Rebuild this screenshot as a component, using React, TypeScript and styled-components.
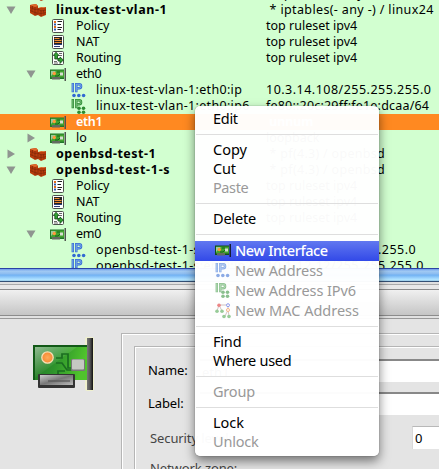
import React from "react";
import styled, { createGlobalStyle, css } from "styled-components";

const Global = createGlobalStyle`
  *{box-sizing:border-box}
  html,body{margin:0;padding:0;overflow:hidden}
  body{font-family:"Noto Sans","Open Sans",sans-serif;color:#000}
  svg{display:block;flex:none}
`;
const Window = styled.div`
  position: relative; width: 439px; height: 469px; overflow: hidden; background: #e4e4e4;
`;
const Tree = styled.div`height: 268px; overflow: hidden; background: #d2ffd0;`;
const TreeScroll = styled.div`margin-top: -14px;`;
const Row = styled.div<{ $selected?: boolean }>`
  display: grid; grid-template-columns: 266px 1fr; height: 16px; line-height: 16px;
  font-size: 12.5px; white-space: pre;
  ${p => p.$selected && css`background: #ff8921; color: #fff; font-weight: 600;`}
`;
const NameCell = styled.div<{ $level: number }>`
  display: flex; align-items: center; padding-left: ${p => 5 + p.$level * 20}px; min-width: 0;
`;
const ArrowSlot = styled.span`width: 12px; margin-right: 12px; display: flex; flex: none; justify-content: center;`;
const IconSlot = styled.span`width: 18px; display: flex; flex: none; justify-content: center;`;
const Label = styled.span<{ $bold?: boolean; $ls: number; $gap: number }>`
  margin-left: ${p => p.$gap}px; font-weight: ${p => (p.$bold ? 700 : "inherit")};
  letter-spacing: ${p => p.$ls}px;
`;
const Detail = styled.span<{ $ls: number }>`letter-spacing: ${p => p.$ls}px;`;
const Splitter = styled.div`
  height: 14px; border-top: 1px solid #2b43a6; border-bottom: 1px solid #345075;
  background: linear-gradient(#6d9de8 0, #a1c9f3 18%, #8bbcf0 42%, #70b0f3 50%, #a7dcff 82%, #b6e9ff 94%, #6f9cc3 100%);
`;
const Edge = styled.div`height: 8px; background: linear-gradient(#e0e0e0 0 2px, #aaa 2px 3px, #e8e8e8 3px 7px, #8c8c8c 7px);`;
const Toolbar = styled.div`height: 26px; background: linear-gradient(#f0f0f0, #c5c5c5); border-bottom: 1px solid #8c8c8c;`;
const Rule = styled.div`height: 3px; background: #e1e1e1; border-bottom: 1px solid #999;`;
const Editor = styled.div`display: flex; height: 150px;`;
const Preview = styled.div`width: 121px; flex: none; padding: 17px 0 0 30px;`;
const Outer = styled.div`
  flex: 1; margin-top: 14px; padding: 12px 0 0 12px; height: 160px;
  border-left: 1px solid #b5b5b5; border-top: 1px solid #b5b5b5; box-shadow: inset 1px 1px #fff;
`;
const Inner = styled.div`
  height: 150px; border-left: 1px solid #b5b5b5; border-top: 1px solid #b5b5b5;
  box-shadow: inset 1px 1px #fff; padding: 12px 0 0 13px;
`;
const Field = styled.div<{ $h: number; $dim?: boolean }>`
  height: ${p => p.$h}px; display: flex; align-items: flex-start; font-size: 13px; line-height: 22px;
  color: ${p => (p.$dim ? "#444" : "#000")}; padding-left: ${p => (p.$dim ? 2 : 0)}px; white-space: nowrap;
`;
const FieldName = styled.span<{ $w: number }>`width: ${p => p.$w}px; flex: none; letter-spacing: -0.1px;`;
const Input = styled.div`
  flex: 1; height: 23px; background: #fff; border-top: 2px solid #888; line-height: 22px; padding-left: 2px; color: #000;
`;
const Spin = styled(Input)`border-top: 1px solid #b8b8b8; border-left: 1px solid #d8d8d8; margin-top: -1px;`;

const Menu = styled.div`
  position: absolute; left: 195px; top: 106px; width: 184px; height: 350px; padding: 4px 0;
  background: rgba(255,255,255,.975); border-radius: 5px; overflow: hidden;
`;
const MenuShadow = styled.div`
  position: absolute; left: 195px; top: 106px; width: 184px; height: 350px; border-radius: 5px;
  box-shadow: 0 0 1px rgba(0,0,0,.65), 0 5px 11px rgba(0,0,0,.5);
`;
const Item = styled.div<{ $icon?: boolean; $off?: boolean; $on?: boolean }>`
  height: ${p => (p.$icon ? 20 : 19)}px; line-height: ${p => (p.$icon ? 20 : 19)}px;
  display: flex; align-items: center; gap: 4px; padding-left: ${p => (p.$icon ? 20 : 18)}px;
  padding-bottom: ${p => (p.$icon ? 3 : 2)}px;
  font-size: 14.5px; white-space: nowrap; color: ${p => (p.$on ? "#fff" : p.$off ? "#999" : "#000")};
  ${p => p.$on && css`background: linear-gradient(#6178f0, #3249e8); font-weight: 500;`}
  svg { opacity: ${p => (p.$off ? 0.55 : 1)}; }
`;
const MenuIcon = styled.span`width: 16px; height: 16px; display: flex; align-items: center; padding-top: 2px;`;
const ItemText = styled.span<{ $ls: number }>`letter-spacing: ${p => p.$ls}px;`;
const Separator = styled.div`height: 1px; margin: 5px 1px 6px; background: #dedede;`;

const Arrow = ({ open }: { open: boolean }) => (
  <svg width="10" height="10" viewBox="0 0 10 10">
    <path d={open ? "M.5 1.5h9L5 9z" : "M1.5 .5v9L9 5z"} fill="#8f9590" />
  </svg>
);
const Firewall = () => (
  <svg width="16" height="13" viewBox="0 0 16 13">
    <path d="M0 1l6-1 2 2v2h3l5-1v8l-5 2-3-2-3 1-5-3z" fill="#b83c0c" />
    <path d="M0 1l6-1 2 2-3 1zM8 4l3-1 5 0-4 1z" fill="#de6a2c" />
    <path d="M0 3.5l5 2 3-.5 3 2 5-1M0 6.5l5 2 6 1 5-1M2.5 2v2.5M2 5v2.5M5 3v8M8 5v3M11 6v6M13.5 6v2.5M7 9v2M14 9v2" stroke="#7e2608" strokeWidth=".7" fill="none" />
  </svg>
);
const Doc = ({ kind }: { kind: "policy" | "nat" | "routing" }) => (
  <svg width="12" height="14" viewBox="0 0 12 14">
    <rect x=".5" y=".5" width="11" height="13" rx="1" fill="#fff" stroke="#4b504b" />
    {kind === "policy" && <>
      <path d="M2 3h2M2 8h2" stroke="#e26c18" strokeWidth="2" />
      <path d="M2 5.5h2M2 10.5h2" stroke="#3158a8" strokeWidth="2" />
      <path d="M5.5 2.5H10M5.5 5.5H9M5.5 8.5H10M5.5 10.5H9" stroke="#222" />
    </>}
    {kind === "nat" && <>
      <rect x="2" y="2" width="8" height="7" fill="#222" />
      <path d="M2.5 3.5h5M2.5 5.5h7M2.5 7.5h7" stroke="#f08c30" />
      <path d="M2 9.5h8M2 11.5h6" stroke="#2f4178" />
    </>}
    {kind === "routing" && <>
      <path d="M7 2.5h3M7 4.5h3M2 10.5h3M2 12h4" stroke="#444" strokeWidth=".8" />
      <path d="M4 1.2L1.3 4.5h1.5V8H6v2h2v2.5l3.3-3.5L8 6v1.5H5.5v-3H7z" fill="#32a332" stroke="#0e4610" strokeWidth=".8" />
    </>}
  </svg>
);
const Card = ({ big, dark }: { big?: boolean; dark?: boolean }) => (
  <svg width={big ? 66 : 16} height={big ? 56 : 13} viewBox={big ? "0 0 66 56" : "0 0 16 13"}>
    {big ? <>
      <defs>
        <linearGradient id="board" x1="0" y1="0" x2="1" y2=".2"><stop stopColor="#237425" /><stop offset=".5" stopColor="#2e932c" /><stop offset="1" stopColor="#50c42c" /></linearGradient>
        <linearGradient id="shine" x1="0" y1="0" x2=".7" y2=".8"><stop stopColor="#fff" stopOpacity=".5" /><stop offset=".75" stopColor="#fff" stopOpacity="0" /></linearGradient>
        <linearGradient id="bar"><stop stopColor="#777" /><stop offset=".5" stopColor="#555" /><stop offset="1" stopColor="#111" /></linearGradient>
        <linearGradient id="metal" x1="0" y1="0" x2="1" y2="1"><stop stopColor="#ccc" /><stop offset=".5" stopColor="#777" /><stop offset="1" stopColor="#bbb" /></linearGradient>
        <radialGradient id="lamp"><stop stopColor="#ffab5a" /><stop offset="1" stopColor="#f78832" /></radialGradient>
      </defs>
      <rect x="55" y="1" width="9" height="54" rx="2" fill="#eff0cd" />
      <rect x="3" y="9" width="54" height="35" fill="url(#board)" />
      <path d="M4 44V10h53" fill="none" stroke="#125917" strokeWidth="2" />
      <path d="M5 11h42L5 42z" fill="url(#shine)" />
      <path d="M26 22h6v-4h6v14h4M26 27h6l5 7h5M28 39v-4h7" fill="none" stroke="#1b6d21" strokeWidth="1.7" />
      <circle cx="17.5" cy="21.5" r="5.7" fill="url(#lamp)" stroke="#f6dfb4" strokeWidth="1.3" />
      <rect x="41" y="23" width="14" height="12" rx="1" fill="#777" />
      <rect x="42" y="23.5" width="12" height="10" rx="1" fill="#c5c8c2" />
      <rect x="8" y="38" width="37" height="14" rx="1" fill="#343434" />
      <rect x="10" y="39" width="33" height="10" fill="url(#metal)" />
      <path d="M18 45h22" stroke="#555" strokeWidth="2" opacity=".6" />
      <rect x="57" y="2" width="6" height="52" fill="url(#bar)" />
    </> : <>
      <rect x="0" y="1.5" width="14" height="9.5" fill={dark ? "#124f18" : "#20762a"} />
      <rect x="1" y="2.5" width="13" height="7" fill="#42a32e" />
      <path d="M1 3h5L1 8z" fill="#9bc99a" />
      <circle cx="4.3" cy="5.5" r="1.7" fill="#ff9a39" />
      <path d="M5 8h3l2-2M7 4h3" stroke="#16611c" fill="none" />
      <rect x="10" y="4.5" width="3" height="3" fill="#d6ddd0" />
      <rect x="2" y="9" width="8" height="2.5" fill="#626b60" />
      <rect x="14.5" y="0" width="1.5" height="13" fill={dark ? "#151b32" : "#4e544e"} />
    </>}
  </svg>
);
const Ip = ({ v6 }: { v6?: boolean }) => {
  const c = v6 ? "#2c8c32" : "#3169d3";
  return (
    <svg width="15" height="15" viewBox="0 0 15 15">
      <path d="M1.8 0v9.2M5.3 9.2V1.2h2.8q2 0 2 2t-2 2H6" stroke={c} strokeWidth="2.4" fill="none" />
      <path d="M1.8 .5v8.2M5.3 8.7V1.2h2.8q2 0 2 2t-2 2H6" stroke={v6 ? "#9bd49b" : "#9cc5f7"} strokeWidth=".7" fill="none" />
      <g fill={c}>{v6
        ? <><circle cx="8" cy="9.3" r="1.8" /><circle cx="12.5" cy="9.3" r="1.8" /><circle cx="8" cy="13.2" r="1.8" /><circle cx="12.5" cy="13.2" r="1.8" /></>
        : <><circle cx="3" cy="12.5" r="1.8" /><circle cx="7.8" cy="12.5" r="1.8" /><circle cx="12.6" cy="12.5" r="1.8" /></>}</g>
    </svg>
  );
};
const Mac = () => (
  <svg width="16" height="16" viewBox="0 0 16 16">
    <path d="M4 2h9M4 2L2 8M4 2l3 6M13 2v5M13 7l-3 6M13 7l1 6" stroke="#9a7777" strokeWidth=".8" fill="none" />
    <circle cx="4" cy="2.2" r="1.8" fill="#de2424" /><circle cx="13" cy="2.2" r="1.5" fill="#fff" stroke="#354bdf" />
    <circle cx="13" cy="7" r="1.5" fill="#fff" stroke="#f17a25" />
    <g fill="#45a345"><circle cx="2" cy="8.3" r="1.8" /><circle cx="7" cy="8.3" r="1.8" /><circle cx="9" cy="13.5" r="1.8" /><circle cx="14" cy="13.5" r="1.8" /></g>
  </svg>
);

type Kind = "fw" | "policy" | "nat" | "routing" | "card" | "ip" | "ip6";
interface Node { name: string; kind: Kind; level: number; open?: boolean; detail?: string; ls?: number; dls?: number; selected?: boolean }
const rules = (): Node[] => [
  { name: "Policy", kind: "policy", level: 1, detail: "top ruleset ipv4", ls: -0.1 },
  { name: "NAT", kind: "nat", level: 1, detail: "top ruleset ipv4" },
  { name: "Routing", kind: "routing", level: 1, detail: "top ruleset ipv4", ls: -0.15 },
];
const nodes: Node[] = [
  { name: "", kind: "fw", level: 0, detail: " * iptables(- any -) / linux24", dls: 0.36 },
  { name: "linux-test-vlan-1", kind: "fw", level: 0, open: true, detail: " * iptables(- any -) / linux24", ls: 0.6, dls: 0.36 },
  ...rules(),
  { name: "eth0", kind: "card", level: 1, open: true, ls: -0.3 },
  { name: "linux-test-vlan-1:eth0:ip", kind: "ip", level: 2, detail: "10.3.14.108/255.255.255.0", ls: 0.32, dls: 0.48 },
  { name: "linux-test-vlan-1:eth0:ip6", kind: "ip6", level: 2, detail: "fe80::20c:29ff:fe1e:dcaa/64", ls: 0.32, dls: 0.2 },
  { name: "eth1", kind: "card", level: 1, detail: " unnum", selected: true, ls: -0.3 },
  { name: "lo", kind: "card", level: 1, open: false, detail: "loopback" },
  { name: "openbsd-test-1", kind: "fw", level: 0, open: false, detail: " * pf(4.3) / openbsd", ls: 0.5, dls: 0.3 },
  { name: "openbsd-test-1-s", kind: "fw", level: 0, open: true, detail: " * pf(4.3) / openbsd", ls: 0.68, dls: 0.3 },
  ...rules(),
  { name: "em0", kind: "card", level: 1, open: true, ls: -0.3 },
  { name: "openbsd-test-1-s:em0:ip", kind: "ip", level: 2, detail: "10.3.14.1/255.255.255.0", ls: 0.32, dls: 0.48 },
  { name: "openbsd-test-1-s:em0:ip2", kind: "ip", level: 2, detail: "10.1.12.12/255.255.255.0", ls: 0.32, dls: 0.48 },
];
const NodeIcon = ({ kind }: { kind: Kind }) => {
  if (kind === "fw") return <Firewall />;
  if (kind === "card") return <Card />;
  if (kind === "ip" || kind === "ip6") return <Ip v6={kind === "ip6"} />;
  return <Doc kind={kind} />;
};
const TreeRow = ({ n }: { n: Node }) => (
  <Row $selected={n.selected}>
    <NameCell $level={n.level}>
      <ArrowSlot>{n.open !== undefined && <Arrow open={n.open} />}</ArrowSlot>
      <IconSlot><NodeIcon kind={n.kind} /></IconSlot>
      <Label $gap={9} $ls={n.ls ?? 0} $bold={n.level === 0}>{n.name}</Label>
    </NameCell>
    <Detail $ls={n.dls ?? 0}>{n.detail}</Detail>
  </Row>
);

interface Entry { text: string; off?: boolean; on?: boolean; icon?: React.ReactNode; ls?: number }
const groups: Entry[][] = [
  [{ text: "Edit", ls: -0.3 }],
  [{ text: "Copy" }, { text: "Cut", ls: -0.2 }, { text: "Paste", off: true, ls: -0.4 }],
  [{ text: "Delete", ls: -0.2 }],
  [
    { text: "New Interface", on: true, icon: <Card dark />, ls: -0.4 },
    { text: "New Address", off: true, icon: <Ip />, ls: -0.1 },
    { text: "New Address IPv6", off: true, icon: <Ip v6 />, ls: -0.06 },
    { text: "New MAC Address", off: true, icon: <Mac /> },
  ],
  [{ text: "Find", ls: -0.2 }, { text: "Where used", ls: -0.3 }],
  [{ text: "Group", off: true, ls: -0.2 }],
  [{ text: "Lock" }, { text: "Unlock", off: true, ls: -0.2 }],
];

export default function App() {
  return (
    <Window>
      <Global />
      <Tree><TreeScroll>{nodes.map((n, i) => <TreeRow key={i} n={n} />)}</TreeScroll></Tree>
      <Splitter /><Edge /><Toolbar /><Rule />
      <Editor>
        <Preview><Card big /></Preview>
        <Outer><Inner>
          <Field $h={33}><FieldName $w={52}>Name:</FieldName><Input>eth1</Input></Field>
          <Field $h={35}><FieldName $w={52}>Label:</FieldName><Input /></Field>
          <Field $h={30} $dim><FieldName $w={262}>Security level:</FieldName><Spin>0</Spin></Field>
          <Field $h={22} $dim><FieldName $w={262}>Network zone:</FieldName></Field>
        </Inner></Outer>
      </Editor>
      <MenuShadow />
      <Menu>
        {groups.map((g, i) => (
          <React.Fragment key={i}>
            {i > 0 && <Separator />}
            {g.map(e => (
              <Item key={e.text} $icon={!!e.icon} $off={e.off} $on={e.on}>
                {e.icon && <MenuIcon>{e.icon}</MenuIcon>}<ItemText $ls={e.ls ?? 0}>{e.text}</ItemText>
              </Item>
            ))}
          </React.Fragment>
        ))}
      </Menu>
    </Window>
  );
}
